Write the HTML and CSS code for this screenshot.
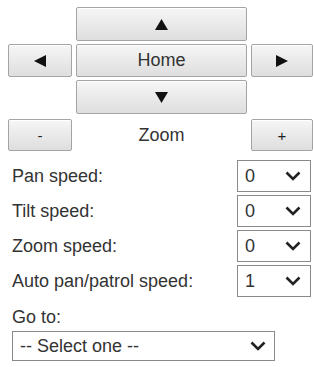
FILE: index.html
```html
<!DOCTYPE html>
<html>
<head>
<meta charset="utf-8">
<link rel="stylesheet" href="styles.css">
</head>
<body>
<div class="panel">
  <div class="pad">
    <button class="btn up"><svg width="13" height="11" viewBox="0 0 13 11"><polygon points="6.5,0 13,11 0,11" fill="#111"/></svg></button>
    <button class="btn left"><svg width="12" height="12" viewBox="0 0 12 12"><polygon points="0,6 12,0 12,12" fill="#111"/></svg></button>
    <button class="btn home">Home</button>
    <button class="btn right"><svg width="12" height="12" viewBox="0 0 12 12"><polygon points="12,6 0,0 0,12" fill="#111"/></svg></button>
    <button class="btn down"><svg width="13" height="11" viewBox="0 0 13 11"><polygon points="0,0 13,0 6.5,11" fill="#111"/></svg></button>
  </div>
  <div class="zoomrow">
    <button class="btn small">-</button>
    <span class="zoomlabel">Zoom</span>
    <button class="btn small">+</button>
  </div>
  <div class="settings">
    <div class="row"><span class="label">Pan speed:</span><div class="sel"><span>0</span><svg class="chev" width="16" height="10" viewBox="0 0 16 10"><polyline points="1.5,1.5 8,8 14.5,1.5" fill="none" stroke="#222" stroke-width="2.6"/></svg></div></div>
    <div class="row"><span class="label">Tilt speed:</span><div class="sel"><span>0</span><svg class="chev" width="16" height="10" viewBox="0 0 16 10"><polyline points="1.5,1.5 8,8 14.5,1.5" fill="none" stroke="#222" stroke-width="2.6"/></svg></div></div>
    <div class="row"><span class="label">Zoom speed:</span><div class="sel"><span>0</span><svg class="chev" width="16" height="10" viewBox="0 0 16 10"><polyline points="1.5,1.5 8,8 14.5,1.5" fill="none" stroke="#222" stroke-width="2.6"/></svg></div></div>
    <div class="row"><span class="label">Auto pan/patrol speed:</span><div class="sel"><span>1</span><svg class="chev" width="16" height="10" viewBox="0 0 16 10"><polyline points="1.5,1.5 8,8 14.5,1.5" fill="none" stroke="#222" stroke-width="2.6"/></svg></div></div>
  </div>
  <div class="goto">
    <span class="label">Go to:</span>
    <div class="sel wide"><span>-- Select one --</span><svg class="chev" width="16" height="10" viewBox="0 0 16 10"><polyline points="1.5,1.5 8,8 14.5,1.5" fill="none" stroke="#222" stroke-width="2.6"/></svg></div>
  </div>
</div>
</body>
</html>
```

FILE: styles.css
```css
html, body {
  margin: 0;
  padding: 0;
  background: #fff;
}
body {
  font-family: "Liberation Sans", Arial, sans-serif;
  color: #333;
}
.panel {
  width: 305px;
  padding: 7px 1px 0 8px;
}
.btn {
  margin: 0;
  padding: 0;
  font-family: inherit;
  border: 1px solid #a4a4a4;
  border-radius: 2px;
  background: linear-gradient(#f6f6f6, #dedede);
  box-shadow: inset 0 1px 0 #fff;
  color: #333;
  display: flex;
  align-items: center;
  justify-content: center;
}
.pad {
  display: grid;
  grid-template-columns: 64px 171px 62px;
  grid-template-rows: 34px 33px 34px;
  column-gap: 4px;
  row-gap: 3px;
}
.up { grid-column: 2; grid-row: 1; }
.left { grid-column: 1; grid-row: 2; }
.home { grid-column: 2; grid-row: 2; font-size: 18px; }
.right { grid-column: 3; grid-row: 2; }
.down { grid-column: 2; grid-row: 3; }
.zoomrow {
  display: grid;
  grid-template-columns: 64px 171px 62px;
  column-gap: 4px;
  height: 32px;
  margin-top: 5px;
}
.small {
  font-size: 15px;
  color: #222;
}
.zoomlabel {
  display: flex;
  align-items: center;
  justify-content: center;
  font-size: 18px;
}
.settings {
  margin-top: 9px;
  display: flex;
  flex-direction: column;
  gap: 3px;
}
.row {
  display: flex;
  align-items: center;
  justify-content: space-between;
  height: 32px;
  padding-left: 4px;
  padding-right: 2px;
}
.label {
  font-size: 18px;
  color: #333;
}
.sel {
  box-sizing: border-box;
  width: 74px;
  height: 32px;
  border: 1px solid #8a8a8a;
  background: #fff;
  display: flex;
  align-items: center;
  justify-content: space-between;
  padding: 0 9px 0 7px;
  font-size: 18px;
  color: #333;
}
.chev {
  display: block;
}
.goto {
  margin-top: 10px;
  padding-left: 4px;
  display: flex;
  flex-direction: column;
  align-items: flex-start;
  gap: 3px;
}
.sel.wide {
  width: 263px;
  height: 30px;
  padding: 0 8px 0 7px;
}
```
